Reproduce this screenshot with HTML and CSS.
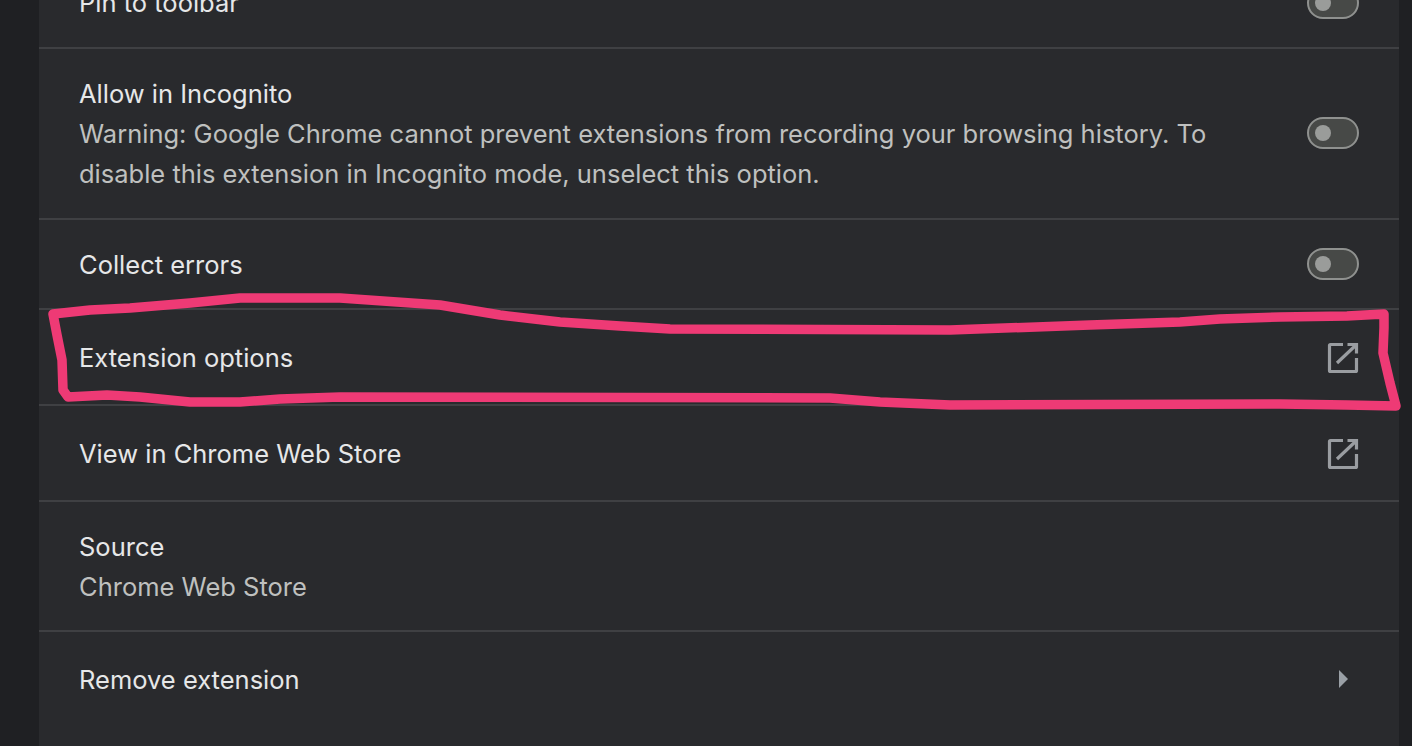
FILE: index.html
```html
<!DOCTYPE html>
<html>
<head>
  <meta charset="UTF-8">
  <title>Extension details</title>
  <link rel="stylesheet" href="styles.css">
</head>
<body>
  <div class="card">
    <div class="row row-first">
      <div class="row-label">Pin to toolbar</div>
      <span class="toggle"></span>
    </div>
    <div class="row row-tall">
      <div class="row-text">
        <div class="row-label">Allow in Incognito</div>
        <div class="row-sub">Warning: Google Chrome cannot prevent extensions from recording your browsing history. To disable this extension in Incognito mode, unselect this option.</div>
      </div>
      <span class="toggle"></span>
    </div>
    <div class="row row-toggle">
      <div class="row-label">Collect errors</div>
      <span class="toggle"></span>
    </div>
    <div class="row row-link">
      <div class="row-label">Extension options</div>
      <svg class="link-icon" viewBox="0 0 32 32">
        <path d="M16 2.500H3.500a1 1 0 0 0-1 1V28.500a1 1 0 0 0 1 1H28.500a1 1 0 0 0 1-1V16M20.500 2.500H29.500V11.500M10 21 28.500 3.500"/>
      </svg>
    </div>
    <div class="row row-link">
      <div class="row-label">View in Chrome Web Store</div>
      <svg class="link-icon" viewBox="0 0 32 32">
        <path d="M16 2.500H3.500a1 1 0 0 0-1 1V28.500a1 1 0 0 0 1 1H28.500a1 1 0 0 0 1-1V16M20.500 2.500H29.500V11.500M10 21 28.500 3.500"/>
      </svg>
    </div>
    <div class="row row-source">
      <div class="row-text">
        <div class="row-label">Source</div>
        <div class="row-sub">Chrome Web Store</div>
      </div>
    </div>
    <div class="row row-last">
      <div class="row-label">Remove extension</div>
      <span class="arrow"></span>
    </div>
  </div>

  <!-- hand drawn marker around the options row -->
  <svg class="marker" viewBox="0 0 1412 746">
    <path d="M53 314 90 310 130 308 190 303 240 298 340 298 440 305 500 315 560 322 620 326 670 329 950 330 1090 325 1180 322 1220 319 1280 317 1347 316 1384 314 1384 328 1383 353 1390 383 1396 406 1347 405 1280 404 950 405 880 402 830 398 340 397 280 399 240 402 190 402 140 397 107 395 68 397 63 390 62 360 57 335Z"/>
  </svg>
</body>
</html>
```
FILE: styles.css
```css
html, body {
  height: 100%;
}
body {
  margin: 0;
  overflow: hidden;
  background-color: #1f2023;
  font-family: Inter, Roboto, sans-serif;
  font-size: 25.5px;
  line-height: 40px;
  color: #e6e7e8;
}
.card {
  width: 1360px;
  margin: -41px 0 0 39px;
  background-color: #292a2d;
  height: 787px;
}
.row {
  display: flex;
  align-items: center;
  justify-content: space-between;
  box-sizing: border-box;
  padding: 0 40px;
  border-bottom: 2px solid #3f4043;
}
.row-first {
  height: 90px;
}
.row-tall {
  height: 171px;
}
.row-tall .toggle {
  margin-bottom: 2px;
}
.row-toggle {
  height: 90px;
}
.row-toggle .row-label,
.row-link .row-label,
.row-source .row-text {
  margin-top: 2px;
}
.row-link {
  height: 96px;
}
.row-source {
  height: 130px;
}
.row-last {
  height: 96px;
  border-bottom: none;
}
.row-text {
  flex: 1;
  padding-right: 80px;
}
.row-sub {
  color: #bfc0bf;
}
.toggle {
  position: relative;
  flex: none;
  box-sizing: border-box;
  width: 52px;
  height: 32px;
  border: 2px solid #8f918f;
  border-radius: 16px;
  background-color: #474947;
}
.toggle::after {
  content: "";
  position: absolute;
  left: 6px;
  top: 6px;
  width: 16px;
  height: 16px;
  border-radius: 50%;
  background-color: #9a9c9a;
}
.link-icon {
  flex: none;
  width: 32px;
  height: 32px;
  margin-top: 2px;
}
.link-icon path {
  fill: none;
  stroke: #9a9da1;
  stroke-width: 3.2;
}
.arrow {
  flex: none;
  width: 0;
  height: 0;
  margin: 0 11px 2px 0;
  border-left: 9px solid #9aa0a6;
  border-top: 9px solid transparent;
  border-bottom: 9px solid transparent;
}
.marker {
  position: absolute;
  left: 0;
  top: 0;
  width: 1412px;
  height: 746px;
}
.marker path {
  fill: none;
  stroke: #ee3a75;
  stroke-width: 9.5;
  stroke-linejoin: round;
}
```
